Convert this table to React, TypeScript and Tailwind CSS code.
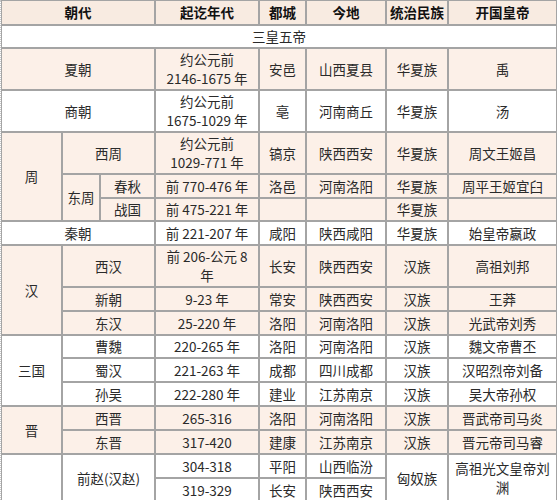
import React from "react";

const P = "bg-[#fcf0e8]";
const W = "bg-white";
const td = "border border-[#a4a4a4] px-[2px] py-0 text-center align-middle leading-[19px] whitespace-nowrap";

function C({
  children,
  bg,
  cs,
  rs,
}: {
  children?: React.ReactNode;
  bg: string;
  cs?: number;
  rs?: number;
}) {
  return (
    <td colSpan={cs} rowSpan={rs} className={`${td} ${bg}`}>
      {children}
    </td>
  );
}

export default function App() {
  return (
    <div className="w-[558px] h-[500px] overflow-hidden bg-white text-[#2a2a2a] text-[13.5px] font-['Noto_Sans_CJK_SC','Noto_Sans',sans-serif]">
      <div className="w-[557px] border-l border-dotted border-[#c8c8c8]">
        <table className="table-fixed w-[556px] border-separate border-spacing-0">
          <colgroup>
            <col className="w-[61px]" />
            <col className="w-[38px]" />
            <col className="w-[55px]" />
            <col className="w-[104px]" />
            <col className="w-[47px]" />
            <col className="w-[80px]" />
            <col className="w-[62px]" />
            <col className="w-[109px]" />
          </colgroup>
          <tbody>
            <tr className="h-[25px] font-bold text-[#111]">
              <C bg="bg-[#f8ebe1]" cs={3}>朝代</C>
              <C bg="bg-[#f8ebe1]">起讫年代</C>
              <C bg="bg-[#f8ebe1]">都城</C>
              <C bg="bg-[#f8ebe1]">今地</C>
              <C bg="bg-[#f8ebe1]">统治民族</C>
              <C bg="bg-[#f8ebe1]">开国皇帝</C>
            </tr>
            <tr className="h-[23px]">
              <C bg={W} cs={8}>三皇五帝</C>
            </tr>
            <tr className="h-[42px]">
              <C bg={P} cs={3}>夏朝</C>
              <C bg={P}>约公元前<br />2146-1675 年</C>
              <C bg={P}>安邑</C>
              <C bg={P}>山西夏县</C>
              <C bg={P}>华夏族</C>
              <C bg={P}>禹</C>
            </tr>
            <tr className="h-[42px]">
              <C bg={W} cs={3}>商朝</C>
              <C bg={W}>约公元前<br />1675-1029 年</C>
              <C bg={W}>亳</C>
              <C bg={W}>河南商丘</C>
              <C bg={W}>华夏族</C>
              <C bg={W}>汤</C>
            </tr>
            <tr className="h-[42px]">
              <C bg={P} rs={3}>周</C>
              <C bg={P} cs={2}>西周</C>
              <C bg={P}>约公元前<br />1029-771 年</C>
              <C bg={P}>镐京</C>
              <C bg={P}>陕西西安</C>
              <C bg={P}>华夏族</C>
              <C bg={P}>周文王姬昌</C>
            </tr>
            <tr className="h-[24px]">
              <C bg={P} rs={2}>东周</C>
              <C bg={P}>春秋</C>
              <C bg={P}>前 770-476 年</C>
              <C bg={P}>洛邑</C>
              <C bg={P}>河南洛阳</C>
              <C bg={P}>华夏族</C>
              <C bg={P}>周平王姬宜臼</C>
            </tr>
            <tr className="h-[23px]">
              <C bg={P}>战国</C>
              <C bg={P}>前 475-221 年</C>
              <C bg={P}></C>
              <C bg={P}></C>
              <C bg={P}>华夏族</C>
              <C bg={P}></C>
            </tr>
            <tr className="h-[24px]">
              <C bg={W} cs={3}>秦朝</C>
              <C bg={W}>前 221-207 年</C>
              <C bg={W}>咸阳</C>
              <C bg={W}>陕西咸阳</C>
              <C bg={W}>华夏族</C>
              <C bg={W}>始皇帝嬴政</C>
            </tr>
            <tr className="h-[42px]">
              <C bg={P} rs={3}>汉</C>
              <C bg={P} cs={2}>西汉</C>
              <C bg={P}>前 206-公元 8<br />年</C>
              <C bg={P}>长安</C>
              <C bg={P}>陕西西安</C>
              <C bg={P}>汉族</C>
              <C bg={P}>高祖刘邦</C>
            </tr>
            <tr className="h-[24px]">
              <C bg={P} cs={2}>新朝</C>
              <C bg={P}>9-23 年</C>
              <C bg={P}>常安</C>
              <C bg={P}>陕西西安</C>
              <C bg={P}>汉族</C>
              <C bg={P}>王莽</C>
            </tr>
            <tr className="h-[24px]">
              <C bg={P} cs={2}>东汉</C>
              <C bg={P}>25-220 年</C>
              <C bg={P}>洛阳</C>
              <C bg={P}>河南洛阳</C>
              <C bg={P}>汉族</C>
              <C bg={P}>光武帝刘秀</C>
            </tr>
            <tr className="h-[23px]">
              <C bg={W} rs={3}>三国</C>
              <C bg={W} cs={2}>曹魏</C>
              <C bg={W}>220-265 年</C>
              <C bg={W}>洛阳</C>
              <C bg={W}>河南洛阳</C>
              <C bg={W}>汉族</C>
              <C bg={W}>魏文帝曹丕</C>
            </tr>
            <tr className="h-[24px]">
              <C bg={W} cs={2}>蜀汉</C>
              <C bg={W}>221-263 年</C>
              <C bg={W}>成都</C>
              <C bg={W}>四川成都</C>
              <C bg={W}>汉族</C>
              <C bg={W}>汉昭烈帝刘备</C>
            </tr>
            <tr className="h-[24px]">
              <C bg={W} cs={2}>孙吴</C>
              <C bg={W}>222-280 年</C>
              <C bg={W}>建业</C>
              <C bg={W}>江苏南京</C>
              <C bg={W}>汉族</C>
              <C bg={W}>吴大帝孙权</C>
            </tr>
            <tr className="h-[24px]">
              <C bg={P} rs={2}>晋</C>
              <C bg={P} cs={2}>西晋</C>
              <C bg={P}>265-316</C>
              <C bg={P}>洛阳</C>
              <C bg={P}>河南洛阳</C>
              <C bg={P}>汉族</C>
              <C bg={P}>晋武帝司马炎</C>
            </tr>
            <tr className="h-[24px]">
              <C bg={P} cs={2}>东晋</C>
              <C bg={P}>317-420</C>
              <C bg={P}>建康</C>
              <C bg={P}>江苏南京</C>
              <C bg={P}>汉族</C>
              <C bg={P}>晋元帝司马睿</C>
            </tr>
            <tr className="h-[24px]">
              <C bg={W} rs={2}></C>
              <C bg={W} cs={2} rs={2}>前赵(汉赵)</C>
              <C bg={W}>304-318</C>
              <C bg={W}>平阳</C>
              <C bg={W}>山西临汾</C>
              <C bg={W} rs={2}>匈奴族</C>
              <C bg={W} rs={2}>高祖光文皇帝刘<br />渊</C>
            </tr>
            <tr className="h-[24px]">
              <C bg={W}>319-329</C>
              <C bg={W}>长安</C>
              <C bg={W}>陕西西安</C>
            </tr>
          </tbody>
        </table>
      </div>
    </div>
  );
}
